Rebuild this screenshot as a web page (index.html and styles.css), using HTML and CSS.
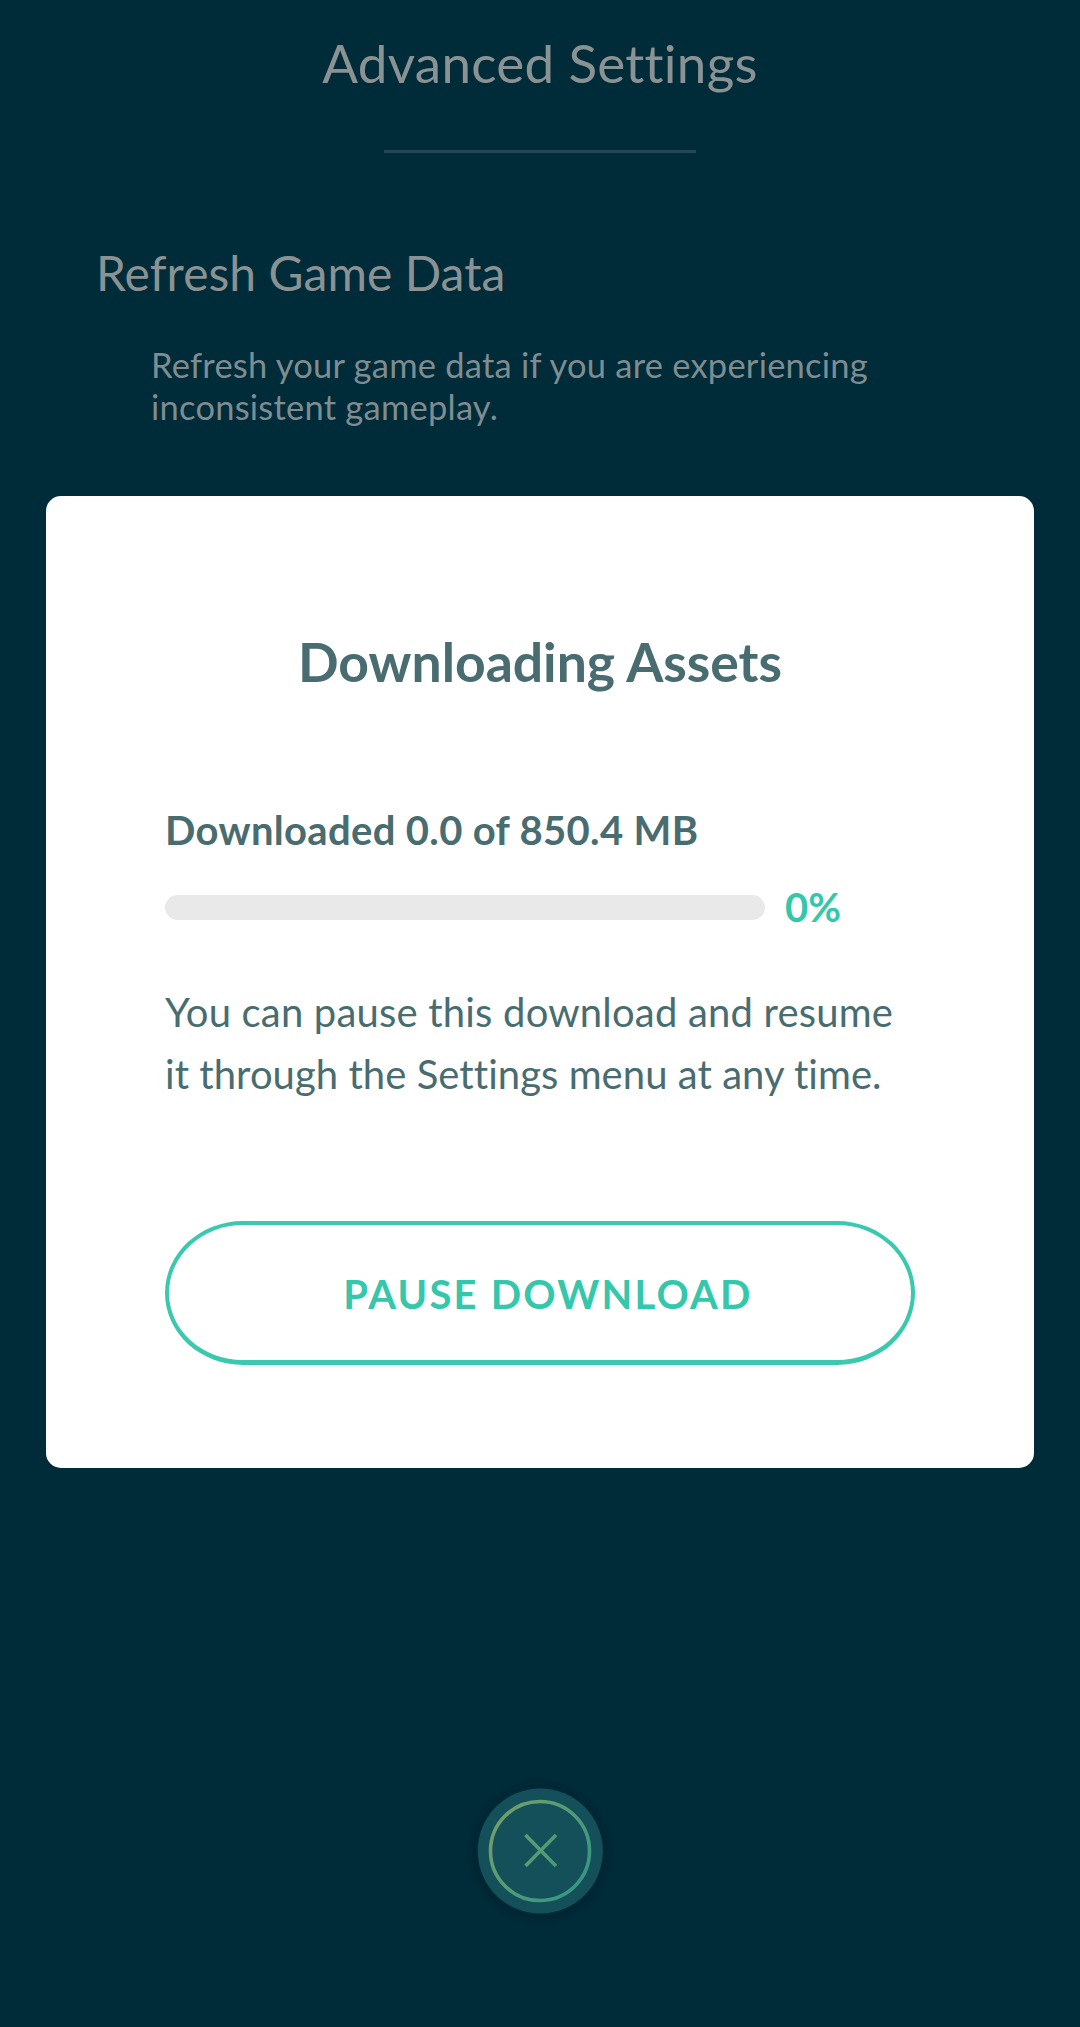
FILE: index.html
```html
<!DOCTYPE html>
<html lang="en">
<head>
<meta charset="utf-8">
<title>Advanced Settings</title>
<link rel="stylesheet" href="styles.css">
</head>
<body>
<main class="screen">
  <header class="header">
    <h1 class="title">Advanced Settings</h1>
    <div class="rule"></div>
  </header>
  <section class="setting">
    <h2 class="setting-title">Refresh Game Data</h2>
    <p class="setting-text">Refresh your game data if you are experiencing<br>inconsistent gameplay.</p>
  </section>
  <section class="dialog">
    <h2 class="dialog-title">Downloading Assets</h2>
    <p class="status">Downloaded 0.0 of 850.4 MB</p>
    <div class="progress"><div class="track"></div><span class="percent">0%</span></div>
    <p class="note">You can pause this download and resume<br><span class="note-end">it through the Settings menu at any time.</span></p>
    <button class="pause">PAUSE DOWNLOAD</button>
  </section>
  <button class="close" aria-label="Close">
    <svg width="128" height="128" viewBox="0 0 128 128" fill="none">
      <defs>
        <linearGradient id="ring" gradientUnits="userSpaceOnUse" x1="22" y1="30" x2="106" y2="98">
          <stop offset="0" stop-color="#6f9f6c"/>
          <stop offset="0.5" stop-color="#559a76"/>
          <stop offset="1" stop-color="#359686"/>
        </linearGradient>
      </defs>
      <circle cx="64.3" cy="64" r="62.5" fill="#135059"/>
      <circle cx="64" cy="64" r="49.5" stroke="url(#ring)" stroke-width="3.6"/>
      <path d="M49.5 48L80 79M80 48L49.5 79" stroke="url(#ring)" stroke-width="3.6"/>
    </svg>
  </button>
</main>
</body>
</html>
```
FILE: styles.css
```css
* { box-sizing: border-box; margin: 0; padding: 0; }
body { background: #002b38; font-family: Lato, sans-serif; }
.screen { height: 2027px; display: flex; flex-direction: column; overflow: hidden; }
.header { height: 154px; padding-top: 31px; display: flex; flex-direction: column; align-items: center; }
.title { font-size: 53px; font-weight: 400; line-height: 64px; letter-spacing: 0.27px; color: #8a9293; white-space: nowrap; }
.rule { width: 312px; height: 3px; margin-top: 55px; background: #254858; }
.setting { height: 342px; padding: 89px 0 0 96px; color: #8a9293; white-space: nowrap; }
.setting-title { font-size: 48px; font-weight: 400; line-height: 60px; letter-spacing: 0.05px; }
.setting-text { font-size: 34.5px; line-height: 42px; letter-spacing: 0.23px; margin: 41px 0 0 55px; color: #7f8c90; }
.dialog { width: 988px; height: 972px; margin: 0 auto; padding: 131px 119px 0; border-radius: 15px; background: #fff; color: #486c70; white-space: nowrap; }
.dialog-title { font-size: 53.5px; line-height: 68px; letter-spacing: -0.03px; text-align: center; }
.status { font-size: 40px; font-weight: 700; line-height: 50px; letter-spacing: 0.33px; margin-top: 110px; }
.progress { display: flex; align-items: center; gap: 20px; height: 50px; margin-top: 27px; }
.track { width: 600px; height: 25px; border-radius: 13px; background: #e9e9e9; }
.percent { font-size: 40px; font-weight: 700; color: #34c7ab; }
.note { font-size: 40px; line-height: 62px; letter-spacing: 0.19px; margin-top: 49px; }
.note-end { letter-spacing: 0.05px; }
.pause { width: 750px; height: 144px; margin-top: 116px; padding: 2px 0 0 16px; border: 4px solid #3ac9af; border-bottom-width: 5px; border-radius: 78px / 72px; background: transparent; color: #34c7ab; font: 700 40px/50px Lato, sans-serif; letter-spacing: 2.2px; }
.close { width: 128px; height: 128px; margin: 319px auto 0; border: 0; border-radius: 50%; background: none; box-shadow: 0 1px 8px 1px rgba(0, 20, 38, 0.45); }
.close svg { display: block; }
```
